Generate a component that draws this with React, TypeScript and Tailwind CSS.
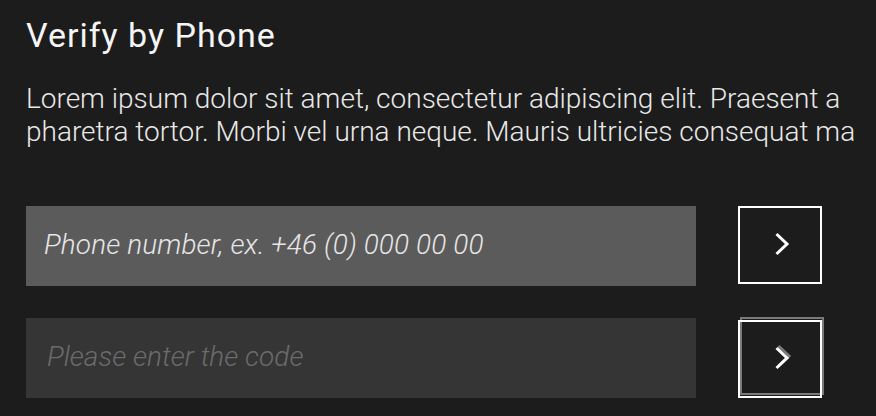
import React from "react";

function Chevron({ shadow = false }: { shadow?: boolean }) {
  return (
    <svg width="24" height="32" viewBox="0 0 24 32" className="block">
      {shadow && (
        <polyline
          points="8.5,5 19,15 8.5,25"
          fill="none"
          stroke="#7a7a7a"
          strokeWidth="3"
          transform="translate(2,-2)"
        />
      )}
      <polyline points="8.5,5 19,15 8.5,25" fill="none" stroke="#ffffff" strokeWidth="3" />
    </svg>
  );
}

export default function App() {
  const font = { fontFamily: "Roboto, 'Noto Sans', sans-serif" };
  const light = { fontFamily: "'Roboto Light', Roboto, 'Noto Sans', sans-serif" };
  return (
    <div className="w-[876px] h-[416px] bg-[#1c1c1c] overflow-hidden" style={font}>
      <div className="pl-[26px] pt-[16px]">
        <h1 className="text-[34px] leading-[38px] tracking-[1px] font-normal text-[#f5f5f5]">Verify by Phone</h1>
        <div
          className="mt-[28px] w-[831px] overflow-hidden text-[28px] leading-[33px] font-light text-[#e8e8e8]"
          style={light}
        >
          <p className="whitespace-nowrap">Lorem ipsum dolor sit amet, consectetur adipiscing elit. Praesent a</p>
          <p className="whitespace-nowrap">pharetra tortor. Morbi vel urna neque. Mauris ultricies consequat ma</p>
        </div>

        <div className="mt-[58px] flex flex-col gap-[32px]">
          <div className="flex items-start gap-[42px]">
            <input
              type="text"
              placeholder="Phone number, ex. +46 (0) 000 00 00"
              className="w-[670px] h-[80px] bg-[#5b5b5b] pl-[18px] pb-[4px] text-[28px] tracking-[0.1px] italic font-light text-[#e6e6e6] placeholder:text-[#e6e6e6] outline-none"
              style={light}
            />
            <button className="w-[84px] h-[78px] border-2 border-white flex items-center justify-center">
              <Chevron />
            </button>
          </div>
          <div className="flex items-start gap-[42px]">
            <input
              type="text"
              placeholder="Please enter the code"
              className="w-[670px] h-[80px] bg-[#353535] pl-[21px] pb-[4px] text-[28px] italic font-light text-[#6b6b6b] placeholder:text-[#6b6b6b] outline-none"
              style={light}
            />
            <button className="relative mt-[2px] w-[84px] h-[78px] flex items-center justify-center">
              <span className="absolute left-[2px] top-[-3px] w-[84px] h-[78px] border-2 border-[#7a7a7a]" />
              <span className="absolute inset-0 border-2 border-white" />
              <span className="relative">
                <Chevron shadow />
              </span>
            </button>
          </div>
        </div>
      </div>
    </div>
  );
}
